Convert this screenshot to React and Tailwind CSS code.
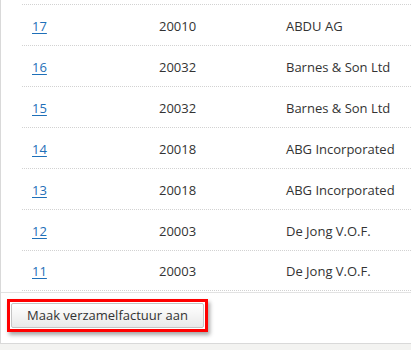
import React from 'react';

const invoices = [
  { id: 17, debtor: 20010, name: 'ABDU AG' },
  { id: 16, debtor: 20032, name: 'Barnes & Son Ltd' },
  { id: 15, debtor: 20032, name: 'Barnes & Son Ltd' },
  { id: 14, debtor: 20018, name: 'ABG Incorporated' },
  { id: 13, debtor: 20018, name: 'ABG Incorporated' },
  { id: 12, debtor: 20003, name: 'De Jong V.O.F.' },
  { id: 11, debtor: 20003, name: 'De Jong V.O.F.' },
];

export default function App() {
  return (
    <div
      className="w-[411px] h-[350px] overflow-hidden bg-[#f3f3f1] text-[13px] text-[#333]"
      style={{ fontFamily: '"Open Sans", "Liberation Sans", sans-serif' }}
    >
      <div className="h-[344px] bg-white border-l border-b border-[#d9d9d9] flex flex-col">
        <div className="pl-[21px] pt-[4px]">
          {invoices.map((inv, index) => (
            <div
              key={inv.id}
              className={`flex items-center h-[41px] pt-[3px] border-t border-dotted border-[#d2d2d2] ${index === invoices.length - 1 ? 'border-b' : ''}`}
            >
              <div className="w-[137px] pl-[10px]">
                <a href="#" className="text-[#1e6fb8] underline underline-offset-2">{inv.id}</a>
              </div>
              <div className="w-[127px]">{inv.debtor}</div>
              <div>{inv.name}</div>
            </div>
          ))}
        </div>
        <div className="mt-[1px] border-t border-[#e2e2e2] pl-[6px] pt-[6px]">
          <div className="inline-flex border-[3px] border-[#ff0000] p-[1px] shadow-[2px_3px_4px_rgba(0,0,0,0.35)]">
            <button className="h-[25px] px-[15px] rounded-[2px] border border-[#c4c4c4] bg-gradient-to-b from-white to-[#e9e9e9] text-[13px] text-[#333] leading-none">
              Maak verzamelfactuur aan
            </button>
          </div>
        </div>
      </div>
    </div>
  );
}
